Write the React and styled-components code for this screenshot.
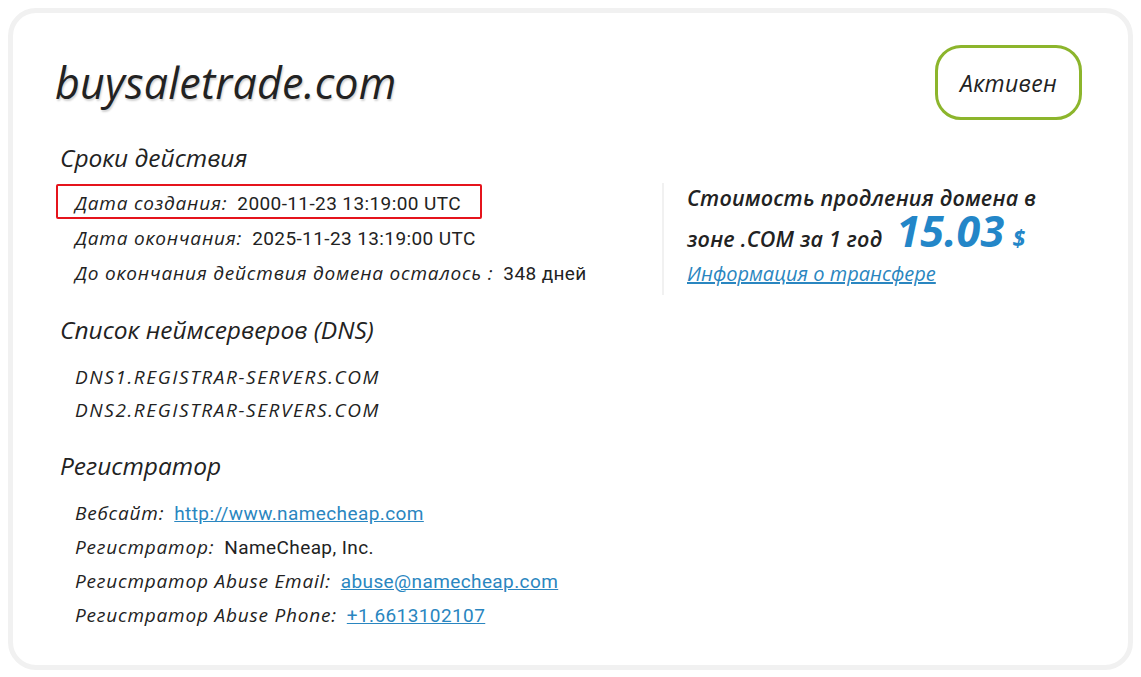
import React from "react";
import styled, { createGlobalStyle } from "styled-components";

const GlobalStyle = createGlobalStyle`
  body {
    margin: 0;
    background: #ffffff;
    font-family: "Open Sans", "Noto Sans", sans-serif;
    color: #222222;
  }
`;

const Page = styled.div`
  padding: 8px;
`;

const Card = styled.div`
  border: 5px solid #f1f1f1;
  border-radius: 28px;
  padding: 32px 46px 33px 42px;
  background: #ffffff;
`;

const Header = styled.div`
  display: flex;
  justify-content: space-between;
  align-items: center;
`;

const Title = styled.h1`
  margin: 0;
  font-size: 43px;
  font-style: italic;
  font-weight: 500;
  letter-spacing: 0.2px;
  color: #222;
  text-shadow: 1px 2px 2px rgba(0, 0, 0, 0.18);
`;

const Badge = styled.div`
  box-sizing: border-box;
  width: 147px;
  height: 75px;
  border: 3px solid #8cb52c;
  border-radius: 26px;
  display: flex;
  align-items: center;
  justify-content: center;
  font-size: 23px;
  font-style: italic;
  font-weight: 500;
  letter-spacing: 0.3px;
  color: #222;
`;

const SectionTitle = styled.h2`
  margin: ${({ $top }) => $top}px 0 ${({ $bottom }) => $bottom}px 5px;
  font-size: 24.5px;
  line-height: 30px;
  font-style: italic;
  font-weight: 500;
  color: #222;
`;

const SplitRow = styled.div`
  display: flex;
  align-items: flex-start;
  height: 112px;
`;

const DatesList = styled.div`
  width: 606px;
  flex-shrink: 0;
  margin-left: 1px;
  padding-top: 1px;
`;

const Row = styled.div`
  box-sizing: border-box;
  display: flex;
  align-items: center;
  width: ${({ $boxed }) => ($boxed ? "426px" : "auto")};
  height: ${({ $h }) => $h || 34}px;
  padding: ${({ $shift }) => $shift || 0}px 0 0 17px;
  border: 2px solid ${({ $boxed }) => ($boxed ? "#e5141c" : "transparent")};
  border-radius: 2px;
  white-space: nowrap;
`;

const Label = styled.span`
  font-size: 19px;
  font-style: italic;
  font-weight: 500;
  letter-spacing: 0.8px;
  color: #222;
  margin-right: 10px;
`;

const Value = styled.span`
  font-family: Roboto, "Noto Sans", sans-serif;
  font-size: 19px;
  letter-spacing: 0.4px;
  color: #222;
`;

const Link = styled.a`
  font-family: Roboto, "Noto Sans", sans-serif;
  font-size: 19px;
  letter-spacing: 0.4px;
  color: #2a86c0;
  text-decoration: underline;
`;

const Dns = styled.div`
  height: 33px;
  display: flex;
  align-items: center;
  padding-left: 19px;
  font-size: 19px;
  font-style: italic;
  font-weight: 500;
  letter-spacing: 1.6px;
  color: #222;
`;

const PriceBlock = styled.div`
  box-sizing: border-box;
  height: 112px;
  border-left: 2px solid #f1f1f1;
  padding-left: 23px;
`;

const PriceText = styled.div`
  margin-top: ${({ $mt }) => $mt || 0}px;
  font-size: 21.5px;
  font-style: italic;
  font-weight: 600;
  letter-spacing: 0.2px;
  color: #222;
  line-height: ${({ $lh }) => $lh}px;
  white-space: nowrap;
`;

const Price = styled.span`
  font-size: 43px;
  font-weight: 700;
  font-style: italic;
  color: #2386c8;
  margin-left: 14px;
  line-height: 20px;
`;

const Currency = styled.span`
  font-size: 23px;
  font-weight: 700;
  font-style: italic;
  color: #2386c8;
  margin-left: 8px;
  line-height: 20px;
`;

const TransferLink = styled.a`
  display: block;
  margin-top: 4px;
  font-size: 20px;
  line-height: 27px;
  font-style: italic;
  font-weight: 500;
  color: #2a86c0;
  text-decoration: underline;
`;

const Indent = styled.div`
  margin-left: 1px;
`;

export default function App() {
  return (
    <Page>
      <GlobalStyle />
      <Card>
        <Header>
          <Title>buysaletrade.com</Title>
          <Badge>Активен</Badge>
        </Header>

        <SectionTitle $top={23} $bottom={10}>
          Сроки действия
        </SectionTitle>
        <SplitRow>
          <DatesList>
            <Row $boxed $h={35} $shift={3}>
              <Label>Дата создания:</Label>
              <Value>2000-11-23 13:19:00 UTC</Value>
            </Row>
            <Row $h={35} $shift={3}>
              <Label>Дата окончания:</Label>
              <Value>2025-11-23 13:19:00 UTC</Value>
            </Row>
            <Row $h={35} $shift={3}>
              <Label>До окончания действия домена осталось :</Label>
              <Value>348 дней</Value>
            </Row>
          </DatesList>
          <PriceBlock>
            <PriceText $lh={30}>Стоимость продления домена в</PriceText>
            <PriceText $lh={34} $mt={8}>
              зоне .COM за 1 год<Price>15.03</Price>
              <Currency>$</Currency>
            </PriceText>
            <TransferLink href="#">Информация о трансфере</TransferLink>
          </PriceBlock>
        </SplitRow>

        <SectionTitle $top={20} $bottom={15}>
          Список неймсерверов (DNS)
        </SectionTitle>
        <Indent>
          <Dns>DNS1.REGISTRAR-SERVERS.COM</Dns>
          <Dns>DNS2.REGISTRAR-SERVERS.COM</Dns>
        </Indent>

        <SectionTitle $top={25} $bottom={15}>
          Регистратор
        </SectionTitle>
        <Indent>
          <Row>
            <Label>Вебсайт:</Label>
            <Link href="#">http://www.namecheap.com</Link>
          </Row>
          <Row>
            <Label>Регистратор:</Label>
            <Value>NameCheap, Inc.</Value>
          </Row>
          <Row>
            <Label>Регистратор Abuse Email:</Label>
            <Link href="#">abuse@namecheap.com</Link>
          </Row>
          <Row>
            <Label>Регистратор Abuse Phone:</Label>
            <Link href="#">+1.6613102107</Link>
          </Row>
        </Indent>
      </Card>
    </Page>
  );
}
